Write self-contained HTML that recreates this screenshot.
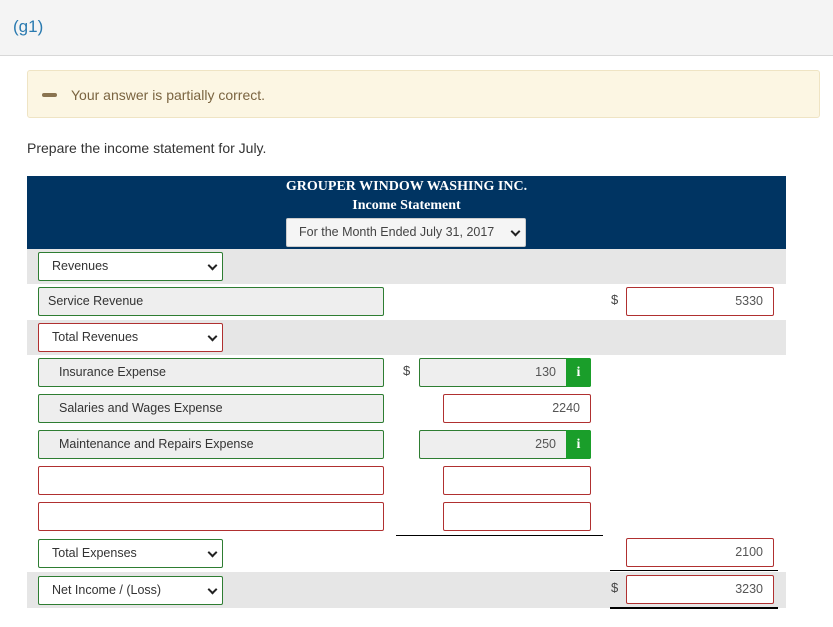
<!DOCTYPE html>
<html><head><style>
*{box-sizing:border-box;margin:0;padding:0}
body{width:833px;height:627px;background:#fff;font-family:"Liberation Sans",sans-serif;position:relative;overflow:hidden;color:#333}
.a{position:absolute}
.top{left:0;top:0;width:833px;height:56px;background:#f4f4f4;border-bottom:1px solid #d8d8d8}
.g1{left:13px;top:17px;font-size:17px;color:#2a7ab0}
.alert{left:27px;top:70px;width:793px;height:48px;background:#fcf6e3;border:1px solid #efe4c4;border-radius:3px}
.dash{left:42px;top:93px;width:15px;height:4px;background:#8a7450;border-radius:2px}
.atext{left:71px;top:87px;font-size:14px;color:#7a6440}
.prep{left:27px;top:140px;font-size:14px;color:#333}
.navy{left:27px;top:176px;width:759px;height:73px;background:#003462}
.h1{left:27px;width:759px;text-align:center;color:#fff;font-family:"Liberation Serif",serif;font-weight:bold;font-size:14px}
.sel{height:29px;border:1px solid;border-radius:2px;font-size:12.5px;padding-left:13px;line-height:27px;background:#fff}
.green{border-color:#2e7d32}
.red{border-color:#b03030}
.gbg{background:#eeeeee}
.chev{position:absolute;right:6px;top:9px;width:7px;height:7px;border-right:2px solid #222;border-bottom:2px solid #222;transform:rotate(45deg)}
.gray{left:27px;width:759px;background:#e6e6e6}
.num{text-align:right;padding-right:10px;padding-left:0;color:#555}
.info{position:absolute;right:-1px;top:-1px;width:25px;height:29px;background:#1a9e2a;color:#fff;font-family:"Liberation Serif",serif;font-weight:bold;text-align:center;line-height:29px;font-size:14px;border-radius:0 2px 2px 0}
.dol{font-size:13px;color:#444}
.line{height:1px;background:#000}
</style></head><body>
<div class="a top"></div>
<div class="a g1">(g1)</div>
<div class="a alert"></div>
<div class="a dash"></div>
<div class="a atext">Your answer is partially correct.</div>
<div class="a prep">Prepare the income statement for July.</div>
<div class="a navy"></div>
<div class="a h1" style="top:179px">GROUPER WINDOW WASHING INC.</div>
<div class="a h1" style="top:198px">Income Statement</div>
<div class="a sel" style="left:286px;top:218px;width:240px;border-color:#ccc;background:#f5f5f5;padding-left:12px;color:#444">For the Month Ended July 31, 2017<span class="chev"></span></div>

<div class="a gray" style="top:249px;height:35px"></div>
<div class="a gray" style="top:320px;height:35px"></div>
<div class="a gray" style="top:572px;height:36px"></div>

<div class="a sel green" style="left:38px;top:252px;width:185px">Revenues<span class="chev"></span></div>
<div class="a sel green gbg" style="left:38px;top:287px;width:346px;padding-left:9px">Service Revenue</div>
<div class="a dol" style="left:611px;top:292px">$</div>
<div class="a sel red num" style="left:626px;top:287px;width:148px">5330</div>

<div class="a sel red" style="left:38px;top:323px;width:185px">Total Revenues<span class="chev"></span></div>

<div class="a sel green gbg" style="left:38px;top:358px;width:346px;padding-left:20px">Insurance Expense</div>
<div class="a dol" style="left:403px;top:363px">$</div>
<div class="a sel green gbg num" style="left:419px;top:358px;width:172px;padding-right:34px">130<span class="info">i</span></div>

<div class="a sel green gbg" style="left:38px;top:394px;width:346px;padding-left:20px">Salaries and Wages Expense</div>
<div class="a sel red num" style="left:443px;top:394px;width:148px">2240</div>

<div class="a sel green gbg" style="left:38px;top:430px;width:346px;padding-left:20px">Maintenance and Repairs Expense</div>
<div class="a sel green gbg num" style="left:419px;top:430px;width:172px;padding-right:34px">250<span class="info">i</span></div>

<div class="a sel red" style="left:38px;top:466px;width:346px"></div>
<div class="a sel red" style="left:443px;top:466px;width:148px"></div>
<div class="a sel red" style="left:38px;top:502px;width:346px"></div>
<div class="a sel red" style="left:443px;top:502px;width:148px"></div>
<div class="a line" style="left:396px;top:535px;width:207px"></div>

<div class="a sel green" style="left:38px;top:539px;width:185px">Total Expenses<span class="chev"></span></div>
<div class="a sel red num" style="left:626px;top:538px;width:148px">2100</div>
<div class="a line" style="left:610px;top:570px;width:168px"></div>

<div class="a sel green" style="left:38px;top:576px;width:185px">Net Income / (Loss)<span class="chev"></span></div>
<div class="a dol" style="left:611px;top:580px">$</div>
<div class="a sel red num" style="left:626px;top:575px;width:148px">3230</div>
<div class="a" style="left:610px;top:607px;width:168px;height:2px;background:#000"></div>
</body></html>
